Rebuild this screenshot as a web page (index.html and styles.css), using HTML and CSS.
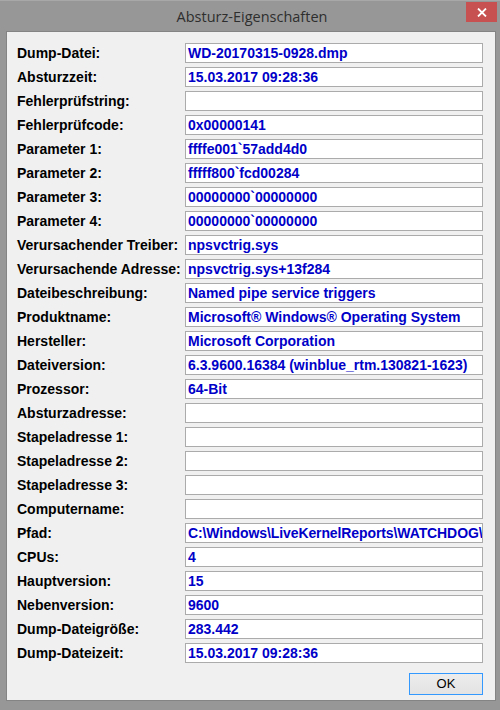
FILE: index.html
```html
<!DOCTYPE html>
<html lang="de">
<head>
<meta charset="utf-8">
<title>Absturz-Eigenschaften</title>
<link rel="stylesheet" href="styles.css">
</head>
<body>
<div class="window">
  <div class="titlebar">
    <span class="spacer"></span>
    <span class="title">Absturz-Eigenschaften</span>
    <span class="close" aria-label="Schließen">
      <svg width="10" height="9" viewBox="0 0 10 9"><path d="M1 0.5 L9 8.5 M9 0.5 L1 8.5" stroke="#fff" stroke-width="1.8" fill="none"/></svg>
    </span>
  </div>
  <div class="client">
    <div class="props">
      <span class="label">Dump-Datei:</span><span class="value">WD-20170315-0928.dmp</span>
      <span class="label">Absturzzeit:</span><span class="value">15.03.2017 09:28:36</span>
      <span class="label">Fehlerprüfstring:</span><span class="value"></span>
      <span class="label">Fehlerprüfcode:</span><span class="value">0x00000141</span>
      <span class="label">Parameter 1:</span><span class="value">ffffe001`57add4d0</span>
      <span class="label">Parameter 2:</span><span class="value">fffff800`fcd00284</span>
      <span class="label">Parameter 3:</span><span class="value">00000000`00000000</span>
      <span class="label">Parameter 4:</span><span class="value">00000000`00000000</span>
      <span class="label">Verursachender Treiber:</span><span class="value">npsvctrig.sys</span>
      <span class="label">Verursachende Adresse:</span><span class="value">npsvctrig.sys+13f284</span>
      <span class="label">Dateibeschreibung:</span><span class="value">Named pipe service triggers</span>
      <span class="label">Produktname:</span><span class="value">Microsoft® Windows® Operating System</span>
      <span class="label">Hersteller:</span><span class="value">Microsoft Corporation</span>
      <span class="label">Dateiversion:</span><span class="value">6.3.9600.16384 (winblue_rtm.130821-1623)</span>
      <span class="label">Prozessor:</span><span class="value">64-Bit</span>
      <span class="label">Absturzadresse:</span><span class="value"></span>
      <span class="label">Stapeladresse 1:</span><span class="value"></span>
      <span class="label">Stapeladresse 2:</span><span class="value"></span>
      <span class="label">Stapeladresse 3:</span><span class="value"></span>
      <span class="label">Computername:</span><span class="value"></span>
      <span class="label">Pfad:</span><span class="value path">C:\Windows\LiveKernelReports\WATCHDOG\</span>
      <span class="label">CPUs:</span><span class="value">4</span>
      <span class="label">Hauptversion:</span><span class="value">15</span>
      <span class="label">Nebenversion:</span><span class="value">9600</span>
      <span class="label">Dump-Dateigröße:</span><span class="value">283.442</span>
      <span class="label">Dump-Dateizeit:</span><span class="value">15.03.2017 09:28:36</span>
    </div>
    <div class="actions">
      <button class="ok" type="button">OK</button>
    </div>
  </div>
</div>
</body>
</html>
```
FILE: styles.css
```css
* { box-sizing: border-box; }

html, body {
  margin: 0;
  padding: 0;
  background: #979797;
}

.window {
  width: 500px;
  height: 710px;
  background: #979797;
  border-top: 1px solid #a8a8a8;
  padding: 0 4px 9px 6px;
  display: flex;
  flex-direction: column;
}

.titlebar {
  height: 30px;
  display: grid;
  grid-template-columns: 1fr auto 1fr;
  align-items: start;
}

.title {
  font-family: "Segoe UI", "Open Sans", "Noto Sans", sans-serif;
  font-size: 14.5px;
  color: #2e2e2e;
  line-height: 18px;
  margin-top: 7px;
  margin-left: 2px;
}

.close {
  justify-self: end;
  width: 31px;
  height: 20px;
  margin-top: 1px;
  margin-right: -1px;
  background: #c75050;
  display: flex;
  align-items: center;
  justify-content: center;
}

.client {
  flex: 1;
  background: #f0f0f0;
  border: 1px solid #848484;
  padding: 11px 12px 0 10px;
  display: flex;
  flex-direction: column;
}

.props {
  display: grid;
  grid-template-columns: 168px 298px;
  grid-auto-rows: 20px;
  row-gap: 4px;
  font-family: "Liberation Sans", Arial, sans-serif;
  font-weight: bold;
  font-size: 14px;
}

.label {
  color: #000000;
  line-height: 20px;
  white-space: nowrap;
}

.value {
  background: #ffffff;
  border: 1px solid #ababab;
  color: #0000c8;
  line-height: 18px;
  padding-left: 2px;
  white-space: nowrap;
  overflow: hidden;
}

.path {
  letter-spacing: -0.1px;
}

.actions {
  display: flex;
  justify-content: flex-end;
  margin-top: 10px;
}

.ok {
  width: 74px;
  height: 22px;
  margin: 0;
  border: 1px solid #3399ff;
  background: linear-gradient(#ededed, #e3e3e3);
  font-family: "Liberation Sans", Arial, sans-serif;
  font-size: 13px;
  color: #000000;
  padding: 0;
  line-height: 20px;
}
```
